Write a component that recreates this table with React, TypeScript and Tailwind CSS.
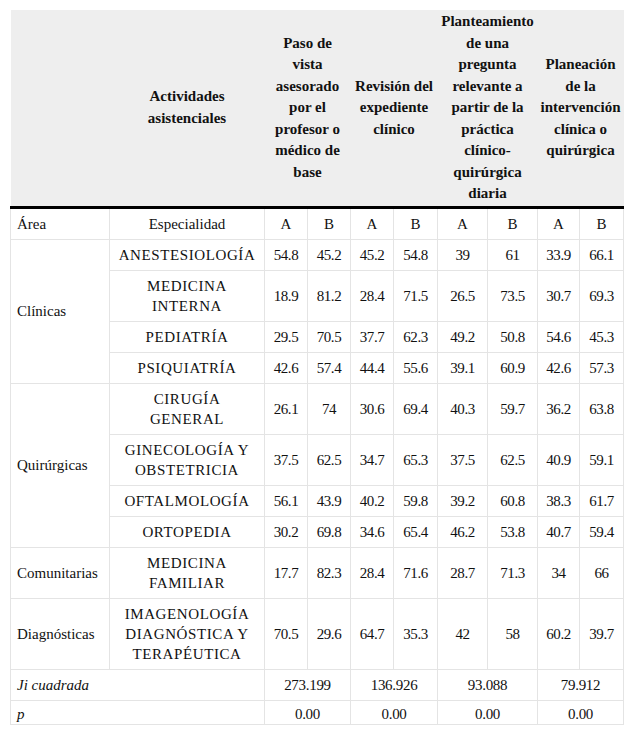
const cols = [99, 155, 43, 43, 43, 44, 50, 50, 42, 44];

type Row = { area?: string; span?: number; esp: string[]; vals: string[] };

const rows: Row[] = [
  { area: 'Clínicas', span: 4, esp: ['ANESTESIOLOGÍA'], vals: ['54.8', '45.2', '45.2', '54.8', '39', '61', '33.9', '66.1'] },
  { esp: ['MEDICINA', 'INTERNA'], vals: ['18.9', '81.2', '28.4', '71.5', '26.5', '73.5', '30.7', '69.3'] },
  { esp: ['PEDIATRÍA'], vals: ['29.5', '70.5', '37.7', '62.3', '49.2', '50.8', '54.6', '45.3'] },
  { esp: ['PSIQUIATRÍA'], vals: ['42.6', '57.4', '44.4', '55.6', '39.1', '60.9', '42.6', '57.3'] },
  { area: 'Quirúrgicas', span: 4, esp: ['CIRUGÍA', 'GENERAL'], vals: ['26.1', '74', '30.6', '69.4', '40.3', '59.7', '36.2', '63.8'] },
  { esp: ['GINECOLOGÍA Y', 'OBSTETRICIA'], vals: ['37.5', '62.5', '34.7', '65.3', '37.5', '62.5', '40.9', '59.1'] },
  { esp: ['OFTALMOLOGÍA'], vals: ['56.1', '43.9', '40.2', '59.8', '39.2', '60.8', '38.3', '61.7'] },
  { esp: ['ORTOPEDIA'], vals: ['30.2', '69.8', '34.6', '65.4', '46.2', '53.8', '40.7', '59.4'] },
  { area: 'Comunitarias', span: 1, esp: ['MEDICINA', 'FAMILIAR'], vals: ['17.7', '82.3', '28.4', '71.6', '28.7', '71.3', '34', '66'] },
  { area: 'Diagnósticas', span: 1, esp: ['IMAGENOLOGÍA', 'DIAGNÓSTICA Y', 'TERAPÉUTICA'], vals: ['70.5', '29.6', '64.7', '35.3', '42', '58', '60.2', '39.7'] },
];

const headers = [
  ['Paso de', 'vista', 'asesorado', 'por el', 'profesor o', 'médico de', 'base'],
  ['Revisión del', 'expediente', 'clínico'],
  ['Planteamiento', 'de una', 'pregunta', 'relevante a', 'partir de la', 'práctica', 'clínico-', 'quirúrgica', 'diaria'],
  ['Planeación', 'de la', 'intervención', 'clínica o', 'quirúrgica'],
];

const lines = (l: string[]) =>
  l.map((s, i) => (
    <span key={i}>
      {i > 0 && <br />}
      {s}
    </span>
  ));

const td = 'border border-[#e4e4e4] px-[4px] py-[5px] align-middle';

export default function App() {
  return (
    <div className="bg-white p-[10px] font-['Liberation_Serif','Times_New_Roman',serif] text-[15px] leading-[20px] text-[#111]">
      <table className="border-collapse table-fixed w-[613px]">
        <colgroup>
          {cols.map((w, i) => (
            <col key={i} style={{ width: w }} />
          ))}
        </colgroup>
        <thead>
          <tr className="h-[197px] bg-[#eeeeee]">
            <th className="border-b-[3px] border-b-black" />
            <th className="border-b-[3px] border-b-black font-bold leading-[21.5px] text-center align-middle">
              Actividades
              <br />
              asistenciales
            </th>
            {headers.map((h, i) => (
              <th key={i} colSpan={2} className="border-b-[3px] border-b-black font-bold leading-[21.5px] text-center align-middle px-0">
                {lines(h)}
              </th>
            ))}
          </tr>
        </thead>
        <tbody>
          <tr>
            <td className={`${td} text-left pl-[6px]`}>Área</td>
            <td className={`${td} text-center`}>Especialidad</td>
            {['A', 'B', 'A', 'B', 'A', 'B', 'A', 'B'].map((v, i) => (
              <td key={i} className={`${td} text-center`}>{v}</td>
            ))}
          </tr>
          {rows.map((r, i) => (
            <tr key={i}>
              {r.area && (
                <td rowSpan={r.span} className={`${td} text-left pl-[6px]`}>{r.area}</td>
              )}
              <td className={`${td} text-center tracking-[0.6px] px-0`}>{lines(r.esp)}</td>
              {r.vals.map((v, j) => (
                <td key={j} className={`${td} text-center px-0 tracking-[-0.4px]`}>{v}</td>
              ))}
            </tr>
          ))}
          <tr>
            <td colSpan={2} className={`${td} text-left pl-[6px] italic`}>Ji cuadrada</td>
            {['273.199', '136.926', '93.088', '79.912'].map((v, i) => (
              <td key={i} colSpan={2} className={`${td} text-center tracking-[-0.3px]`}>{v}</td>
            ))}
          </tr>
          <tr>
            <td colSpan={2} className="border border-[#e4e4e4] pl-[6px] pt-[4px] pb-0 leading-[19px] italic text-left">p</td>
            {['0.00', '0.00', '0.00', '0.00'].map((v, i) => (
              <td key={i} colSpan={2} className="border border-[#e4e4e4] pt-[4px] pb-0 leading-[19px] text-center tracking-[-0.3px]">{v}</td>
            ))}
          </tr>
        </tbody>
      </table>
    </div>
  );
}
